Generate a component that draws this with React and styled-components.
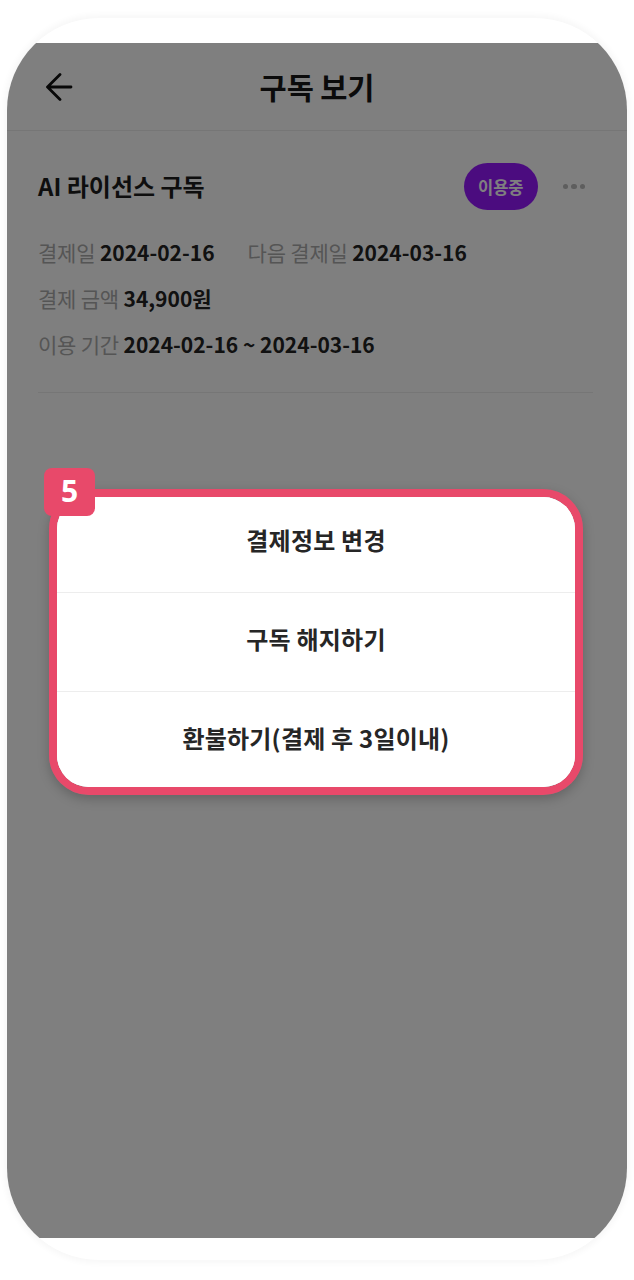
import styled, { createGlobalStyle } from "styled-components";

const GlobalStyle = createGlobalStyle`
  html, body {
    margin: 0;
    padding: 0;
    background: #ffffff;
  }
  body {
    font-family: "Noto Sans CJK KR", "Noto Sans", sans-serif;
    -webkit-font-smoothing: antialiased;
  }
  * {
    box-sizing: border-box;
  }
`;

const Stage = styled.div`
  width: 634px;
  height: 1280px;
  padding: 18px 7px 20px;
`;

const PhoneFrame = styled.div`
  height: 1242px;
  background: #ffffff;
  border-radius: 92px;
  box-shadow: 0 0 6px 3px rgba(0, 0, 0, 0.035);
  overflow: hidden;
  display: flex;
  flex-direction: column;
  padding: 25px 0 22px;
`;

const Screen = styled.div`
  position: relative;
  flex: 1;
  background: #ffffff;
  overflow: hidden;
`;

const Dim = styled.div`
  position: absolute;
  inset: 0;
  background: rgba(0, 0, 0, 0.5);
`;

const Header = styled.header`
  height: 88px;
  display: grid;
  grid-template-columns: 1fr auto 1fr;
  align-items: center;
  padding: 0 38px;
  border-bottom: 1px solid #ececec;
`;

const BackButton = styled.button`
  width: 28px;
  height: 28px;
  padding: 0;
  border: 0;
  background: none;
  display: flex;
  align-items: center;
  color: #111111;
`;

const Title = styled.h1`
  margin: 0 0 2px;
  font-size: 29.5px;
  font-weight: 700;
  color: #161616;
  letter-spacing: -0.1px;
`;

const Section = styled.section`
  padding: 32px 34px 0 31px;
`;

const TopRow = styled.div`
  display: flex;
  align-items: center;
  height: 47px;
`;

const Name = styled.h2`
  flex: 1;
  margin: 0 0 2px;
  font-size: 24px;
  font-weight: 700;
  color: #1c1c1c;
  letter-spacing: 0;
`;

const StatusBadge = styled.span`
  height: 47px;
  padding: 0 14px;
  border-radius: 24px;
  background: #9619ff;
  color: #ffffff;
  font-size: 16.5px;
  font-weight: 700;
  display: flex;
  align-items: center;
`;

const MoreButton = styled.button`
  margin-left: 25px;
  margin-right: 8px;
  border: 0;
  padding: 0;
  background: none;
  display: flex;
  gap: 3px;
`;

const Dot = styled.i`
  width: 5.5px;
  height: 5.5px;
  border-radius: 50%;
  background: #bcbcbc;
`;

const InfoList = styled.div`
  display: flex;
  flex-direction: column;
  gap: 18px;
  padding: 28px 0 34px;
  border-bottom: 1px solid #ececec;
`;

const InfoLine = styled.div`
  display: flex;
  gap: 33px;
  height: 28px;
  align-items: center;
`;

const Info = styled.span`
  font-size: 21px;
  color: #ababab;
  letter-spacing: -0.2px;

  b {
    font-weight: 700;
    color: #222222;
    letter-spacing: 0;
  }
`;

const Highlight = styled.div`
  position: absolute;
  top: 446px;
  left: 42px;
  width: 534px;
  border: 8px solid #e8496a;
  border-radius: 40px;
  box-shadow: 0 4px 12px rgba(0, 0, 0, 0.22);
`;

const StepTag = styled.span`
  position: absolute;
  top: -29px;
  left: -13px;
  width: 51px;
  height: 48px;
  border-radius: 8px;
  background: #e8496a;
  color: #ffffff;
  font-family: "Noto Sans", "Liberation Sans", sans-serif;
  font-size: 30px;
  font-weight: 700;
  display: flex;
  align-items: center;
  justify-content: center;
  padding-bottom: 4px;
`;

const Sheet = styled.div`
  background: #ffffff;
  border-radius: 32px;
  overflow: hidden;
  display: flex;
  flex-direction: column;
`;

const SheetItem = styled.button`
  height: ${(p) => p.$h}px;
  border: 0;
  border-top: ${(p) => (p.$first ? "0" : "1px solid #ededed")};
  background: #ffffff;
  font-family: inherit;
  font-size: 24px;
  font-weight: 700;
  color: #262626;
  letter-spacing: 0.2px;
  padding: 0 0 ${(p) => p.$shift || 0}px;
`;

const ArrowLeft = () => (
  <svg width="28" height="28" viewBox="0 0 28 28" fill="none">
    <path
      d="M26 14H3 M15 1.5 L2.5 14 L15 26.5"
      stroke="currentColor"
      strokeWidth="2.8"
      strokeLinecap="round"
      strokeLinejoin="round"
    />
  </svg>
);

const App = () => {
  const actions = [
    { label: "결제정보 변경", h: 95, shift: 10 },
    { label: "구독 해지하기", h: 99, shift: 8 },
    { label: "환불하기(결제 후 3일이내)", h: 96, shift: 4 },
  ];

  return (
    <Stage>
      <GlobalStyle />
      <PhoneFrame>
        <Screen>
          <Header>
            <BackButton>
              <ArrowLeft />
            </BackButton>
            <Title>구독 보기</Title>
            <span />
          </Header>
          <Section>
            <TopRow>
              <Name>AI 라이선스 구독</Name>
              <StatusBadge>이용중</StatusBadge>
              <MoreButton>
                <Dot />
                <Dot />
                <Dot />
              </MoreButton>
            </TopRow>
            <InfoList>
              <InfoLine>
                <Info>
                  결제일 <b>2024-02-16</b>
                </Info>
                <Info>
                  다음 결제일 <b>2024-03-16</b>
                </Info>
              </InfoLine>
              <InfoLine>
                <Info>
                  결제 금액 <b>34,900원</b>
                </Info>
              </InfoLine>
              <InfoLine>
                <Info>
                  이용 기간 <b>2024-02-16 ~ 2024-03-16</b>
                </Info>
              </InfoLine>
            </InfoList>
          </Section>
          <Dim />
          <Highlight>
            <StepTag>5</StepTag>
            <Sheet>
              {actions.map((a, i) => (
                <SheetItem key={a.label} $first={i === 0} $h={a.h} $shift={a.shift}>
                  {a.label}
                </SheetItem>
              ))}
            </Sheet>
          </Highlight>
        </Screen>
      </PhoneFrame>
    </Stage>
  );
};

export default App;
